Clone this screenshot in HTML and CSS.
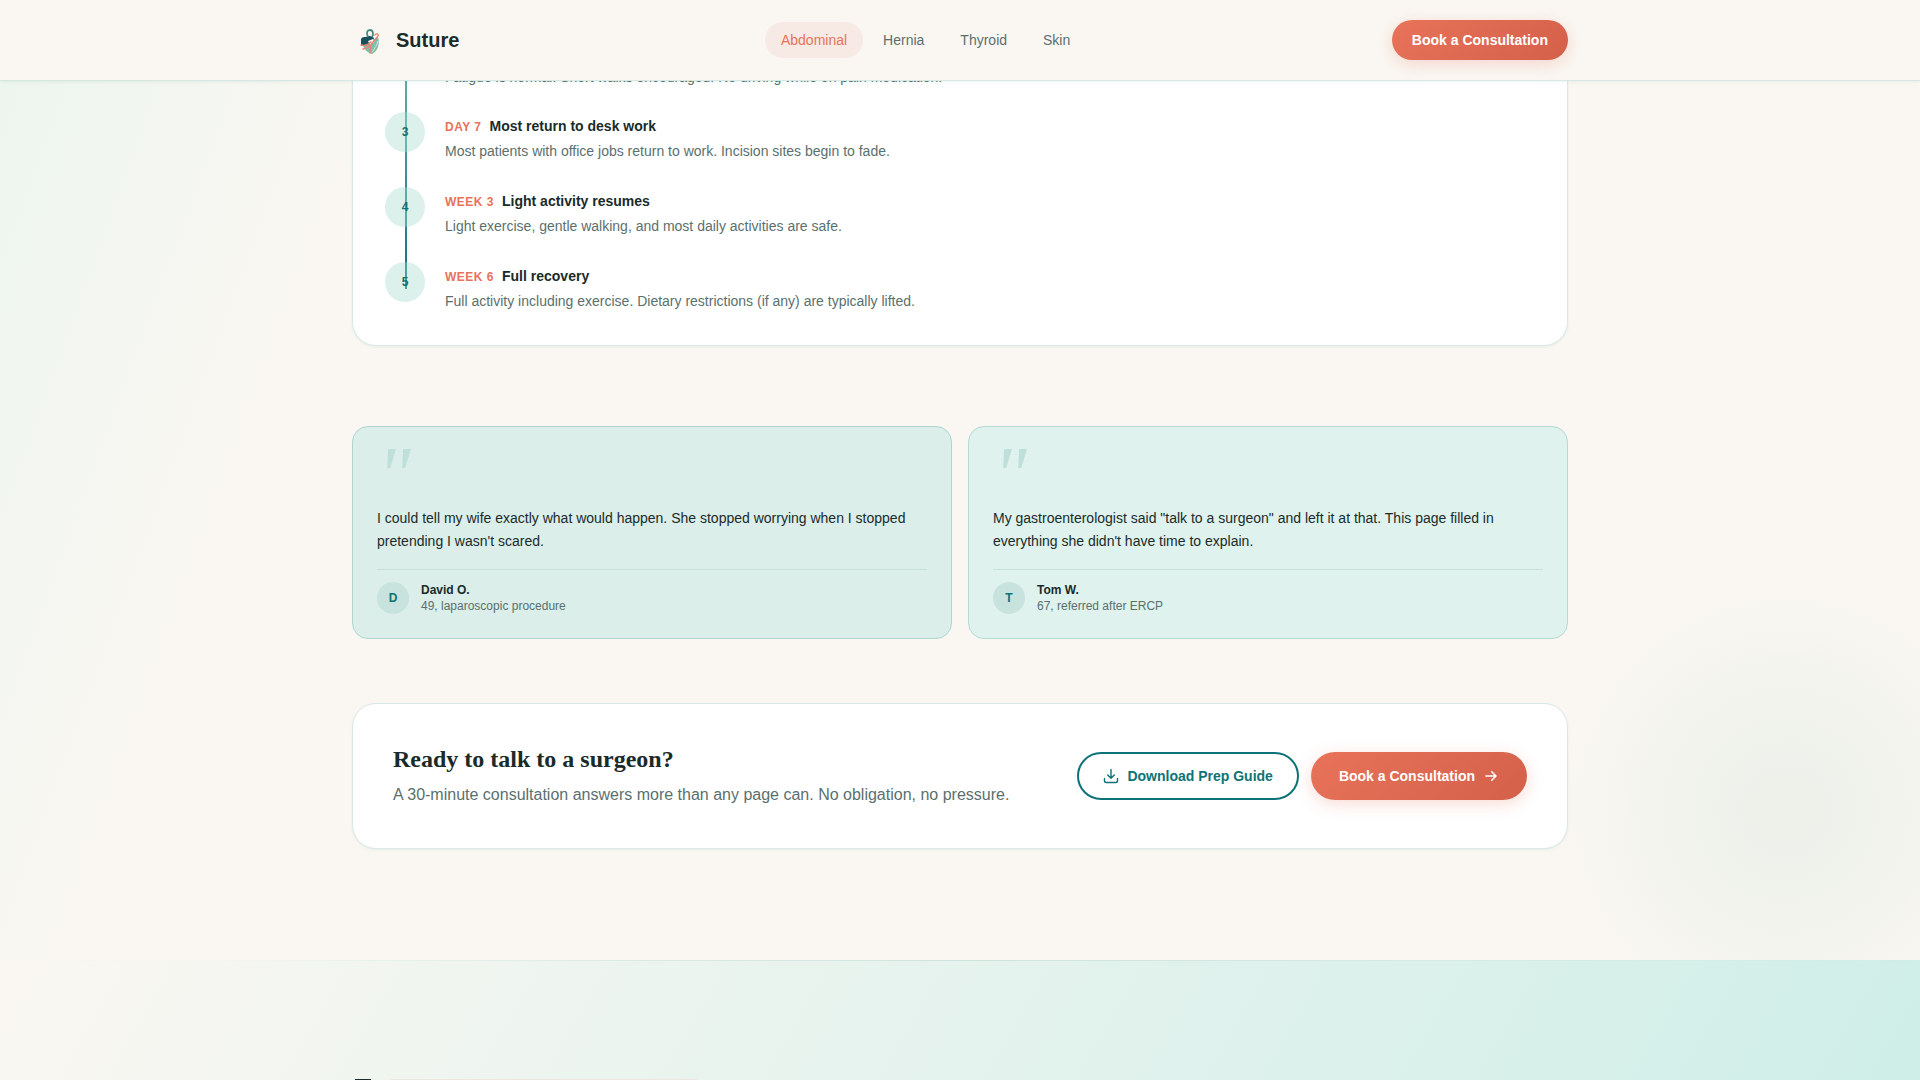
FILE: index.html
```
<!DOCTYPE html>
<html lang="en">
<head>
    <meta charset="UTF-8">
    <meta name="viewport" content="width=device-width, initial-scale=1.0">
    <title>Suture</title>
    <link rel="stylesheet" href="styles.css">
</head>
<body>
    <header class="header">
        <div class="container header-inner">
            <a href="#" class="brand">
                <svg class="brand-logo" viewBox="0 0 36 36" aria-hidden="true">
                    <path d="M10 17c2-1 4-2 6-1l4 2c3 0 4-3 6-3 2 7 0 14-6 17-7-2-10-8-10-15z" fill="#7dbfae"/>
                    <path d="M9 17c1-2 3-2 5-2 3-2 6-1 8 1l-2 5-4 2-7 1z" fill="#174f5c"/>
                    <path d="M16 19l5-2 1 3-4 3z" fill="#fbf8f4"/>
                    <path d="M16 15c-2-4-1-7 2-7s4 4 2 7" fill="none" stroke="#3f8c83" stroke-width="1.8"/>
                    <path d="M23 13c1-2 4-1 3 1s-5 5-7 9l-1 8M9 23c4 1 7 0 10-3M11 27c4-1 8-3 10-7" fill="none" stroke="#ee8270" stroke-width="1.4" stroke-linecap="round"/>
                    <path d="M26 19c-1 4-3 7-6 11" fill="none" stroke="#d9e6d6" stroke-width="1"/>
                </svg>
                <span>Suture</span>
            </a>
            <nav class="nav">
                <a href="#abdominal" class="nav-link active">Abdominal</a>
                <a href="#hernia" class="nav-link">Hernia</a>
                <a href="#thyroid" class="nav-link">Thyroid</a>
                <a href="#skin" class="nav-link">Skin</a>
            </nav>
            <button type="button" class="btn btn-primary btn-small">Book a Consultation</button>
        </div>
    </header>

    <main class="main">
        <div class="container">
            <!-- Recovery timeline -->
            <section class="card timeline-card">
                <ol class="timeline">
                    <li class="step step-continued">
                        <div class="step-body">
                            <p>Fatigue is normal. Short walks encouraged. No driving while on pain medication.</p>
                        </div>
                    </li>
                    <li class="step">
                        <span class="step-number">3</span>
                        <div class="step-body">
                            <h4><span class="step-when">Day 7</span>Most return to desk work</h4>
                            <p>Most patients with office jobs return to work. Incision sites begin to fade.</p>
                        </div>
                    </li>
                    <li class="step">
                        <span class="step-number">4</span>
                        <div class="step-body">
                            <h4><span class="step-when">Week 3</span>Light activity resumes</h4>
                            <p>Light exercise, gentle walking, and most daily activities are safe.</p>
                        </div>
                    </li>
                    <li class="step">
                        <span class="step-number">5</span>
                        <div class="step-body">
                            <h4><span class="step-when">Week 6</span>Full recovery</h4>
                            <p>Full activity including exercise. Dietary restrictions (if any) are typically lifted.</p>
                        </div>
                    </li>
                </ol>
            </section>

            <!-- Testimonials -->
            <section class="quotes">
                <figure class="quote quote-deep">
                    <div class="quote-mark" aria-hidden="true">"</div>
                    <blockquote>I could tell my wife exactly what would happen. She stopped worrying when I stopped pretending I wasn't scared.</blockquote>
                    <figcaption>
                        <span class="avatar">D</span>
                        <div>
                            <div class="author">David O.</div>
                            <div class="detail">49, laparoscopic procedure</div>
                        </div>
                    </figcaption>
                </figure>
                <figure class="quote">
                    <div class="quote-mark" aria-hidden="true">"</div>
                    <blockquote>My gastroenterologist said "talk to a surgeon" and left it at that. This page filled in everything she didn't have time to explain.</blockquote>
                    <figcaption>
                        <span class="avatar">T</span>
                        <div>
                            <div class="author">Tom W.</div>
                            <div class="detail">67, referred after ERCP</div>
                        </div>
                    </figcaption>
                </figure>
            </section>

            <!-- Call to action -->
            <section class="card cta">
                <div class="cta-text">
                    <h3>Ready to talk to a surgeon?</h3>
                    <p>A 30-minute consultation answers more than any page can. No obligation, no pressure.</p>
                </div>
                <div class="cta-actions">
                    <button type="button" class="btn btn-outline">
                        <svg class="icon" viewBox="0 0 16 16" aria-hidden="true"><path d="M8 1.5v8.5M4.7 7L8 10.2 11.3 7M1.5 10.5v2.2c0 1 .8 1.8 1.8 1.8h9.4c1 0 1.8-.8 1.8-1.8v-2.2"/></svg>
                        Download Prep Guide
                    </button>
                    <button type="button" class="btn btn-primary btn-large">
                        Book a Consultation
                        <svg class="icon icon-bold" viewBox="0 0 16 16" aria-hidden="true"><path d="M3 8h10M8.7 3.7L13 8l-4.3 4.3"/></svg>
                    </button>
                </div>
            </section>
        </div>
    </main>

    <footer class="footer">
        <div class="container footer-inner">
            <span class="footer-logo"></span>
            <span class="footer-panel"></span>
        </div>
    </footer>
</body>
</html>
```
FILE: styles.css
```
* {
    box-sizing: border-box;
    margin: 0;
    padding: 0;
}

html,
body {
    height: 100%;
}

body {
    display: flex;
    flex-direction: column;
    overflow: hidden;
    font-family: "Liberation Sans", Arial, sans-serif;
    font-size: 14px;
    color: #1a2b2a;
    background-color: #faf7f2;
    background-image:
        radial-gradient(circle 230px at 93% 810px, rgba(70, 160, 130, 0.08), rgba(70, 160, 130, 0.05) 45%, transparent),
        linear-gradient(110deg, #ecf5ef 0, #faf7f2 400px);
}

a {
    color: inherit;
    text-decoration: none;
}

.container {
    width: 100%;
    max-width: 1280px;
    margin: 0 auto;
    padding: 0 32px;
}

/* Header */
.header {
    flex: none;
    position: relative;
    z-index: 10;
    background: #faf7f2;
    border-bottom: 1px solid #d7e8e3;
    box-shadow: 0 1px 3px rgba(13, 115, 119, 0.08);
}

.header-inner {
    display: flex;
    align-items: center;
    justify-content: space-between;
    height: 80px;
}

.brand {
    display: flex;
    align-items: center;
    gap: 8px;
    font-size: 20px;
    font-weight: bold;
}

.brand-logo {
    width: 36px;
    height: 36px;
}

.nav {
    display: flex;
    gap: 4px;
}

.nav-link {
    padding: 8px 16px;
    border-radius: 18px;
    line-height: 20px;
    color: #5a706e;
}

.nav-link.active {
    color: #e8735a;
    background: #f7eae4;
}

.btn {
    display: inline-flex;
    align-items: center;
    justify-content: center;
    gap: 8px;
    height: 48px;
    border: none;
    border-radius: 24px;
    font-family: inherit;
    font-size: 14px;
    font-weight: bold;
    white-space: nowrap;
    cursor: pointer;
}

.btn-primary {
    color: #fff;
    background: linear-gradient(135deg, #e8735a, #d4604a);
    box-shadow: 0 4px 16px rgba(232, 115, 90, 0.25);
}

.btn-small {
    height: 40px;
    padding: 0 20px;
}

.btn-large {
    padding: 0 28px;
}

.btn-outline {
    padding: 0 24px;
    border: 2px solid #0d7377;
    color: #0d7377;
    background: transparent;
}

.icon {
    width: 16px;
    height: 16px;
    fill: none;
    stroke: currentColor;
    stroke-width: 1.4;
    stroke-linecap: round;
    stroke-linejoin: round;
}

.icon-bold {
    stroke-width: 1.6;
}

/* The first card runs up under the header */
.main {
    flex: none;
    margin-top: -14px;
    padding-bottom: 111px;
}

.card {
    background: #fff;
    border: 1px solid #d9e9e6;
    border-radius: 24px;
    box-shadow: 0 1px 3px rgba(13, 115, 119, 0.08);
}

.timeline-card {
    padding: 0 32px 32px;
    border-top: none;
    border-radius: 0 0 24px 24px;
}

.timeline {
    position: relative;
    display: flex;
    flex-direction: column;
    gap: 24px;
    list-style: none;
}

.timeline::before {
    content: "";
    position: absolute;
    top: 0;
    bottom: 24px;
    left: 20px;
    width: 2px;
    background: linear-gradient(#62b0a7, #0d7377);
}

.step {
    display: flex;
    gap: 20px;
}

.step-number {
    position: relative;
    display: flex;
    align-items: center;
    justify-content: center;
    width: 40px;
    height: 40px;
    border-radius: 50%;
    font-size: 12px;
    font-weight: bold;
    color: #0d7377;
    background: rgba(167, 217, 207, 0.4);
}

.step-body {
    padding-top: 4px;
}

.step-body h4 {
    margin-bottom: 3px;
    font-size: 14px;
    line-height: 20px;
}

.step-when {
    margin-right: 8px;
    font-size: 12px;
    letter-spacing: 0.5px;
    text-transform: uppercase;
    color: #e8735a;
}

.step-body p {
    line-height: 23px;
    color: #5a706e;
}

.step-continued .step-body {
    padding: 0 0 0 60px;
}

.step-continued p {
    line-height: 21px;
}

/* Quotes */
.quotes {
    display: grid;
    grid-template-columns: 1fr 1fr;
    gap: 16px;
    margin-top: 80px;
}

.quote {
    padding: 24px;
    border: 1px solid #b4dbd4;
    border-radius: 16px;
    background: #dff2ed;
}

.quote-deep {
    background: #dbeee9;
    border-color: #acd6cf;
}

.quote-mark {
    height: 56px;
    font-family: "Liberation Serif", serif;
    font-size: 80px;
    font-style: italic;
    line-height: 48px;
    color: #bfdfda;
}

.quote blockquote {
    line-height: 23px;
}

.quote figcaption {
    display: flex;
    align-items: center;
    gap: 12px;
    margin-top: 16px;
    padding-top: 12px;
    border-top: 1px solid #c9dfda;
    font-size: 12px;
    line-height: 16px;
}

.avatar {
    display: flex;
    align-items: center;
    justify-content: center;
    width: 32px;
    height: 32px;
    border-radius: 50%;
    font-weight: bold;
    color: #0d7377;
    background: #c8e2dd;
}

.author {
    font-weight: bold;
}

.detail {
    color: #5a706e;
}

/* Call to action */
.cta {
    display: flex;
    align-items: center;
    justify-content: space-between;
    gap: 32px;
    margin-top: 64px;
    padding: 40px;
}

.cta h3 {
    font-family: "Liberation Serif", serif;
    font-size: 24px;
    line-height: 30px;
}

.cta p {
    margin-top: 8px;
    font-size: 16px;
    line-height: 26px;
    color: #5a706e;
}

.cta-actions {
    display: flex;
    gap: 12px;
}

/* Footer */
.footer {
    flex: 1;
    min-height: 0;
    overflow: hidden;
    padding-top: 118px;
    border-top: 1px solid;
    border-image: linear-gradient(90deg, transparent 10%, #cfe3de 50%, transparent) 1;
    background: linear-gradient(120deg, #faf7f2, #cfeee8);
}

.footer-inner {
    display: flex;
    gap: 20px;
}

.footer-logo {
    width: 16px;
    height: 16px;
    margin-left: 3px;
    background: #1a2b2a;
}

.footer-panel {
    width: 306px;
    height: 16px;
    background: #ece6df;
}
```
